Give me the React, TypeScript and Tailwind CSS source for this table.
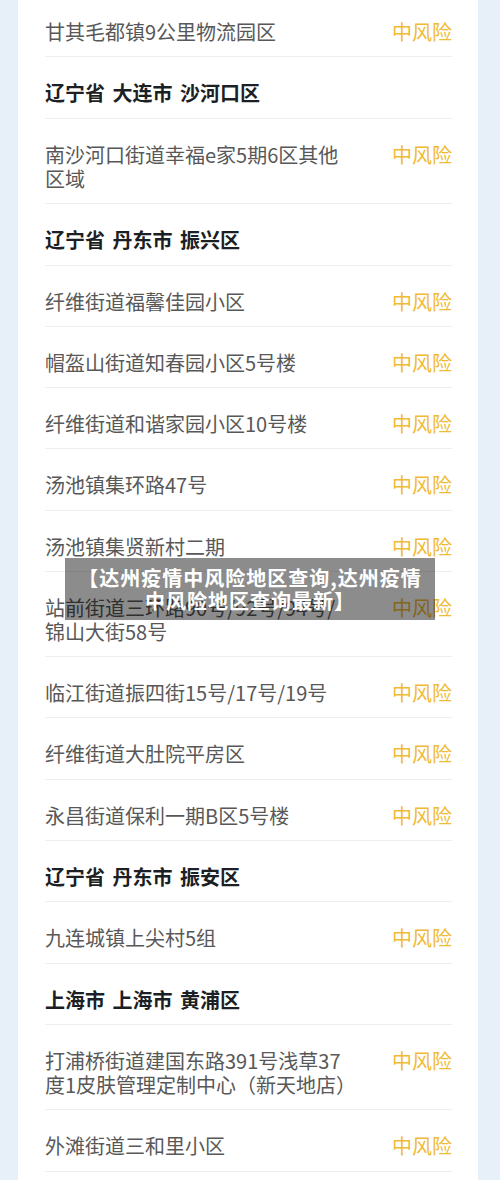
import React from 'react';

type Row =
  | { kind: 'header'; text: string }
  | { kind: 'place'; lines: string[] };

const rows: Row[] = [
  { kind: 'place', lines: ['甘其毛都镇9公里物流园区'] },
  { kind: 'header', text: '辽宁省 大连市 沙河口区' },
  { kind: 'place', lines: ['南沙河口街道幸福e家5期6区其他', '区域'] },
  { kind: 'header', text: '辽宁省 丹东市 振兴区' },
  { kind: 'place', lines: ['纤维街道福馨佳园小区'] },
  { kind: 'place', lines: ['帽盔山街道知春园小区5号楼'] },
  { kind: 'place', lines: ['纤维街道和谐家园小区10号楼'] },
  { kind: 'place', lines: ['汤池镇集环路47号'] },
  { kind: 'place', lines: ['汤池镇集贤新村二期'] },
  { kind: 'place', lines: ['站前街道三环路90号/92号/94号/', '锦山大街58号'] },
  { kind: 'place', lines: ['临江街道振四街15号/17号/19号'] },
  { kind: 'place', lines: ['纤维街道大肚院平房区'] },
  { kind: 'place', lines: ['永昌街道保利一期B区5号楼'] },
  { kind: 'header', text: '辽宁省 丹东市 振安区' },
  { kind: 'place', lines: ['九连城镇上尖村5组'] },
  { kind: 'header', text: '上海市 上海市 黄浦区' },
  { kind: 'place', lines: ['打浦桥街道建国东路391号浅草37', '度1皮肤管理定制中心（新天地店）'] },
  { kind: 'place', lines: ['外滩街道三和里小区'] },
];

const App: React.FC = () => {
  return (
    <div className="relative h-[1180px] overflow-hidden bg-[#e7f0f8] font-['Noto_Sans_CJK_SC',sans-serif]">
      {/* list card, runs past the bottom of the window */}
      <div className="ml-[18px] -mt-[4px] min-h-[1200px] w-[460px] bg-white pl-[27px] pr-[26px]">
        {rows.map((row, i) =>
          row.kind === 'header' ? (
            <div
              key={i}
              className="border-b border-[#efefef] pt-[24px] pb-[12.5px] text-[20px] leading-[24px] font-bold text-[#1c1f24] [word-spacing:3px]"
            >
              {row.text}
            </div>
          ) : (
            <div
              key={i}
              className="flex items-start justify-between border-b border-[#efefef] pt-[24px] pb-[12.25px] text-[20px] leading-[24px]"
            >
              <div className="text-[#585858]">
                {row.lines.map((l, j) => (
                  <div key={j} className="whitespace-nowrap">{l}</div>
                ))}
              </div>
              <span className="shrink-0 text-[#f1ba34]">中风险</span>
            </div>
          )
        )}
      </div>

      {/* title banner over the list */}
      <div className="absolute left-[65px] top-[558px] w-[370px] bg-black/45 py-[8px] text-center text-[20px] leading-[23px] font-bold tracking-[1px] text-white">
        <div>【达州疫情中风险地区查询,达州疫情</div>
        <div>中风险地区查询最新】</div>
      </div>
    </div>
  );
};

export default App;
